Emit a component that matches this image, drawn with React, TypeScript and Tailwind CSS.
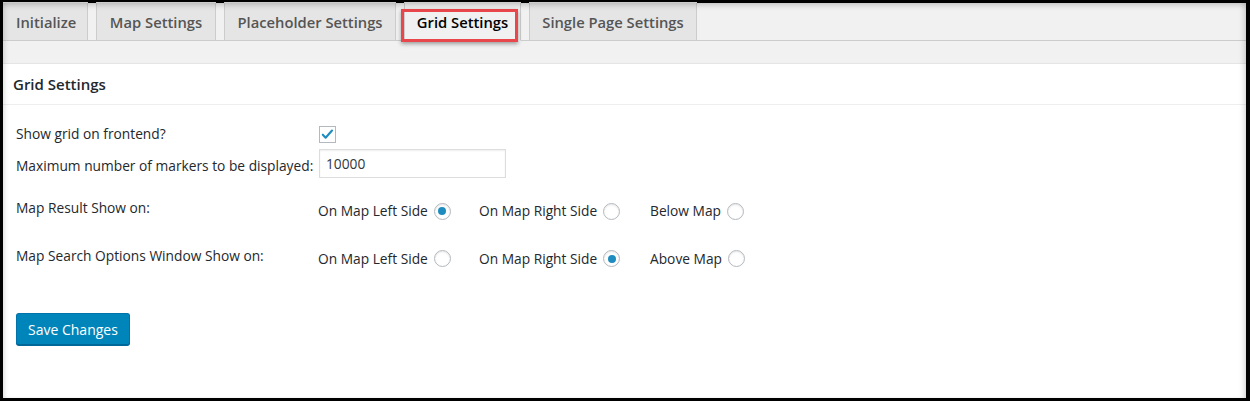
import React from 'react'

const tabs = [
  { label: 'Initialize', active: false, w: 'w-[85px] pl-[13px] justify-start' },
  { label: 'Map Settings', active: false, w: 'w-[120px] justify-center' },
  { label: 'Placeholder Settings', active: false, w: 'w-[172px] justify-center' },
  { label: 'Grid Settings', active: true, w: 'w-[117px] justify-center' },
  { label: 'Single Page Settings', active: false, w: 'w-[168px] justify-center' },
]

function Radio({ checked }: { checked?: boolean }) {
  return (
    <span className="ml-[6px] inline-flex h-[17px] w-[17px] items-center justify-center rounded-full border border-[#b4b9be] bg-white shadow-[inset_0_1px_2px_rgba(0,0,0,0.1)]">
      {checked && <span className="h-[8px] w-[8px] rounded-full bg-[#1e8cbe]" />}
    </span>
  )
}

function RadioGroup({ options, selected }: { options: string[]; selected: number }) {
  return (
    <div className="flex items-center">
      {options.map((o, i) => (
        <label key={o} className={`flex items-center ${i === 0 ? 'w-[161px]' : i === 1 ? 'w-[171px]' : ''}`}>
          <span>{o}</span>
          <Radio checked={i === selected} />
        </label>
      ))}
    </div>
  )
}

export default function App() {
  return (
    <div className="h-[401px] w-[1250px] bg-black pt-[3px] pl-[3px] pr-[4px] pb-[3px] font-['Open_Sans',sans-serif]">
      <div className="relative flex h-full flex-col bg-[#f1f1f1]">
        {/* tabs */}
        <div className="flex h-[38px] items-end border-b border-[#ccc] text-[14.75px] font-semibold">
          {tabs.map((t, i) => (
            <div
              key={t.label}
              className={`-mb-px flex h-[39px] shrink-0 items-center border border-[#ccc] whitespace-nowrap leading-none ${t.w} ${
                i === 0 ? 'ml-0 border-l-0' : 'ml-[8px]'
              } ${t.active ? 'border-b-[#f1f1f1] bg-[#f1f1f1] text-black' : 'bg-[#e5e5e5] text-[#555]'}`}
            >
              <span className="mt-[1px]">{t.label}</span>
            </div>
          ))}
        </div>
        <div className="h-[22px]" />
        {/* panel */}
        <div className="flex-1 border-t border-[#e5e5e5] bg-white text-[13.75px] text-[#23282d]">
          <div className="flex h-[41px] items-center border-b border-[#eee] px-[10px] text-[15px] font-semibold">
            Grid Settings
          </div>
          <div className="px-[13px] pt-[20px]">
            <div className="flex h-[19px] items-center">
              <span className="w-[303px]">Show grid on frontend?</span>
              <span className="flex h-[17px] w-[17px] items-center justify-center border border-[#b4b9be] bg-white">
                <svg viewBox="0 0 16 16" className="h-[15px] w-[15px]">
                  <path d="M3 8.2l3 3.2 6.8-7.6" fill="none" stroke="#1e8cbe" strokeWidth="2.2" strokeLinecap="round" strokeLinejoin="round" />
                </svg>
              </span>
            </div>
            <div className="mt-[5px] flex h-[29px] items-center">
              <span className="w-[303px] pt-[5px]">Maximum number of markers to be displayed:</span>
              <input
                defaultValue="10000"
                className="h-[29px] w-[187px] border border-[#ddd] bg-white px-[6px] text-[13.75px] text-[#32373c] shadow-[inset_0_1px_2px_rgba(0,0,0,0.07)] outline-none"
              />
            </div>
            <div className="mt-[20px] flex items-start">
              <span className="w-[302px]">Map Result Show on:</span>
              <div className="pt-[3px]">
                <RadioGroup options={['On Map Left Side', 'On Map Right Side', 'Below Map']} selected={0} />
              </div>
            </div>
            <div className="mt-[24px] flex items-start">
              <span className="w-[302px]">Map Search Options Window Show on:</span>
              <div className="pt-[3px]">
                <RadioGroup options={['On Map Left Side', 'On Map Right Side', 'Above Map']} selected={1} />
              </div>
            </div>
            <button className="mt-[44px] h-[32px] rounded-[3px] border border-[#0073aa] border-b-[#006799] bg-[#0085ba] px-[11px] text-[14px] text-white shadow-[0_1px_0_#006799]">
              Save Changes
            </button>
          </div>
        </div>
        {/* red highlight on active tab */}
        <div className="pointer-events-none absolute left-[398px] top-[6px] h-[33px] w-[117px] border-[3px] border-[#e8474c] shadow-[0_2px_4px_rgba(0,0,0,0.35)]" />
        <div className="pointer-events-none absolute inset-0 shadow-[inset_-5px_0_5px_-2px_rgba(0,0,0,0.12),inset_0_5px_5px_-2px_rgba(0,0,0,0.15),inset_5px_0_5px_-3px_rgba(0,0,0,0.1)]" />
      </div>
    </div>
  )
}
